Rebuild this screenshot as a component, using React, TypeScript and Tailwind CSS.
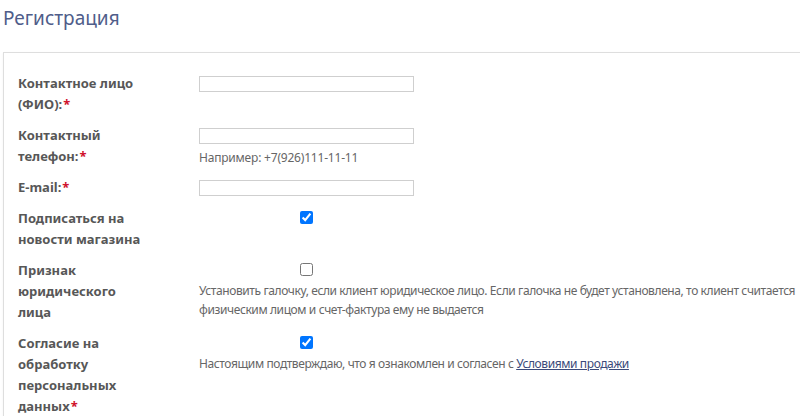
import React from "react";

const labelCls = "w-[124px] text-[13px] leading-[21px] font-bold text-[#575757]";

function Star() {
    return <span className="ml-[1px] text-[#d0112b]">*</span>;
}

function TextField({ hint }: { hint?: string }) {
    return (
        <div className="flex flex-col">
            <input type="text" className="mt-[3px] h-[16px] w-[215px] border border-[#cfcfcf] bg-white" />
            {hint && <div className="mt-[5px] text-[12px] leading-[18px] tracking-[-0.2px] text-[#666]">{hint}</div>}
        </div>
    );
}

function CheckField({ checked, children }: { checked?: boolean; children?: React.ReactNode }) {
    return (
        <div className="flex flex-col">
            <div className="flex w-[215px] justify-center pt-[3px]">
                <input type="checkbox" defaultChecked={checked} className="m-0 h-[13px] w-[13px] accent-[#0075ff]" />
            </div>
            {children && (
                <div className="mt-[5px] w-[602px] text-[12px] leading-[19px] tracking-[-0.4px] text-[#666]">{children}</div>
            )}
        </div>
    );
}

function Row({ label, children }: { label: React.ReactNode; children: React.ReactNode }) {
    return (
        <div className="flex">
            <div className="w-[181px] shrink-0">
                <div className={labelCls}>{label}</div>
            </div>
            {children}
        </div>
    );
}

export default function App() {
    return (
        <div className="h-[416px] w-[800px] overflow-hidden bg-white font-['Noto_Sans',sans-serif]">
            <h1 className="pl-[3px] pt-[4px] text-[19px] leading-[28px] text-[#4f5d8a]">Регистрация</h1>
            <div className="ml-[3px] mt-[20px] w-[830px] border border-[#dedede] pb-[40px] pl-[14px] pt-[20px] shadow-[0_1px_2px_rgba(0,0,0,0.06)]">
                <div className="flex flex-col gap-[10px]">
                    <Row label={<>Контактное лицо (ФИО):<Star /></>}>
                        <TextField />
                    </Row>
                    <Row label={<>Контактный телефон:<Star /></>}>
                        <TextField hint="Например: +7(926)111-11-11" />
                    </Row>
                    <Row label={<>E-mail:<Star /></>}>
                        <TextField />
                    </Row>
                    <Row label="Подписаться на новости магазина">
                        <CheckField checked />
                    </Row>
                    <Row label="Признак юридического лица">
                        <CheckField>
                            Установить галочку, если клиент юридическое лицо. Если галочка не будет установлена, то клиент считается физическим лицом и счет-фактура ему не выдается
                        </CheckField>
                    </Row>
                    <Row label={<>Согласие на обработку персональных данных<Star /></>}>
                        <CheckField checked>
                            Настоящим подтверждаю, что я ознакомлен и согласен с{" "}
                            <a href="#" className="text-[#3b4a7a] underline">Условиями продажи</a>
                        </CheckField>
                    </Row>
                </div>
            </div>
        </div>
    );
}
